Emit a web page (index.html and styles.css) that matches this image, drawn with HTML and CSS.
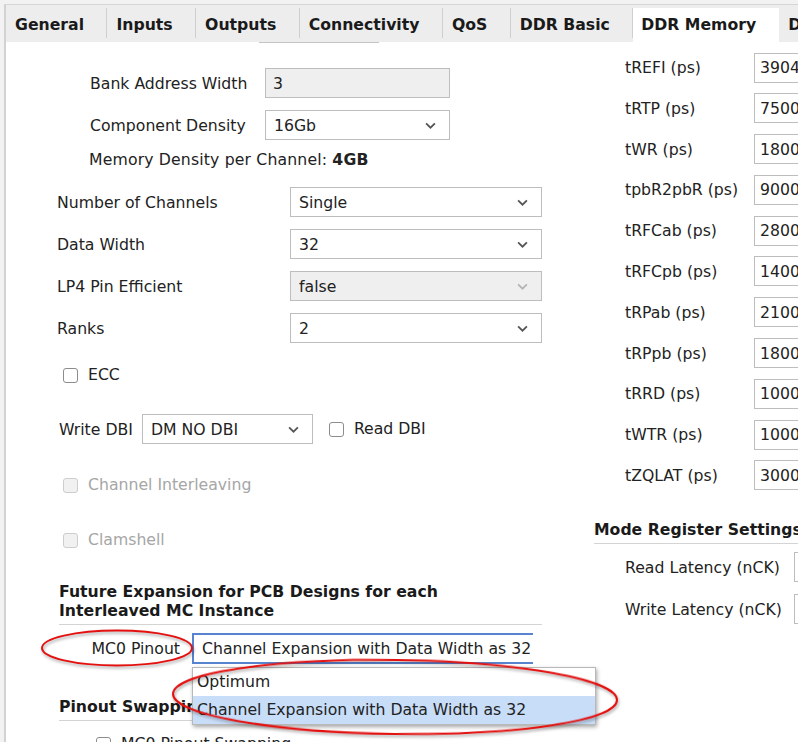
FILE: index.html
```html
<!DOCTYPE html>
<html>
<head>
<meta charset="utf-8">
<link rel="stylesheet" href="styles.css">
</head>
<body>
<div class="frame">
  <div class="panel">
    <div class="tabs">
      <div class="tab">General</div>
      <div class="tab">Inputs</div>
      <div class="tab">Outputs</div>
      <div class="tab">Connectivity</div>
      <div class="tab">QoS</div>
      <div class="tab">DDR Basic</div>
      <div class="tab active">DDR Memory</div>
      <div class="tab">DDR Address Mapping</div>
    </div>
    <div class="content">
      <div class="col-left">
        <div class="stub"></div>

        <div class="row row-a first">
          <div class="label la">Bank Address Width</div>
          <div class="field disabled wa">3</div>
        </div>
        <div class="row row-a">
          <div class="label la">Component Density</div>
          <div class="field select wa">16Gb<svg class="chev" viewBox="0 0 10 6"><path d="M1 1 L5 5 L9 1"/></svg></div>
        </div>
        <div class="density">Memory Density per Channel: <b>4GB</b></div>

        <div class="row row-b first">
          <div class="label lb">Number of Channels</div>
          <div class="field select wb">Single<svg class="chev" viewBox="0 0 10 6"><path d="M1 1 L5 5 L9 1"/></svg></div>
        </div>
        <div class="row row-b">
          <div class="label lb">Data Width</div>
          <div class="field select wb">32<svg class="chev" viewBox="0 0 10 6"><path d="M1 1 L5 5 L9 1"/></svg></div>
        </div>
        <div class="row row-b">
          <div class="label lb">LP4 Pin Efficient</div>
          <div class="field select disabled wb">false<svg class="chev light" viewBox="0 0 10 6"><path d="M1 1 L5 5 L9 1"/></svg></div>
        </div>
        <div class="row row-b">
          <div class="label lb">Ranks</div>
          <div class="field select wb">2<svg class="chev" viewBox="0 0 10 6"><path d="M1 1 L5 5 L9 1"/></svg></div>
        </div>

        <div class="check ecc"><span class="box"></span>ECC</div>

        <div class="row dbi">
          <div class="label ldbi">Write DBI</div>
          <div class="field select wdbi">DM NO DBI<svg class="chev" viewBox="0 0 10 6"><path d="M1 1 L5 5 L9 1"/></svg></div>
          <div class="check inline"><span class="box"></span>Read DBI</div>
        </div>

        <div class="check off ci"><span class="box"></span>Channel Interleaving</div>
        <div class="check off cs"><span class="box"></span>Clamshell</div>

        <div class="heading h-future">Future Expansion for PCB Designs for each<br>Interleaved MC Instance</div>

        <div class="row mc0">
          <div class="label lmc">MC0 Pinout</div>
          <div class="combo">Channel Expansion with Data Width as 32</div>
          <div class="popup">
            <div class="item">Optimum</div>
            <div class="item sel">Channel Expansion with Data Width as 32</div>
          </div>
        </div>

        <div class="heading h-swap">Pinout Swapping</div>
        <div class="check swapck"><span class="box"></span>MC0 Pinout Swapping</div>
      </div>

      <div class="col-right">
        <div class="rrow first"><div class="rlabel">tREFI (ps)</div><div class="rfield">3904000</div></div>
        <div class="rrow"><div class="rlabel">tRTP (ps)</div><div class="rfield">7500</div></div>
        <div class="rrow"><div class="rlabel">tWR (ps)</div><div class="rfield">18000</div></div>
        <div class="rrow"><div class="rlabel">tpbR2pbR (ps)</div><div class="rfield">90000</div></div>
        <div class="rrow"><div class="rlabel">tRFCab (ps)</div><div class="rfield">280000</div></div>
        <div class="rrow"><div class="rlabel">tRFCpb (ps)</div><div class="rfield">140000</div></div>
        <div class="rrow"><div class="rlabel">tRPab (ps)</div><div class="rfield">21000</div></div>
        <div class="rrow"><div class="rlabel">tRPpb (ps)</div><div class="rfield">18000</div></div>
        <div class="rrow"><div class="rlabel">tRRD (ps)</div><div class="rfield">10000</div></div>
        <div class="rrow"><div class="rlabel">tWTR (ps)</div><div class="rfield">10000</div></div>
        <div class="rrow"><div class="rlabel">tZQLAT (ps)</div><div class="rfield">30000</div></div>

        <div class="heading h-mode">Mode Register Settings</div>
        <div class="rrow lat first-lat"><div class="rlabel wide">Read Latency (nCK)</div><div class="rfield">28</div></div>
        <div class="rrow lat"><div class="rlabel wide">Write Latency (nCK)</div><div class="rfield">14</div></div>
      </div>
    </div>
  </div>
</div>
<svg class="annot" width="798" height="742" viewBox="0 0 798 742">
  <ellipse cx="117" cy="648" rx="75" ry="17.5"/>
  <ellipse cx="395" cy="697" rx="222" ry="37" transform="rotate(0.8 395 697)"/>
</svg>
</body>
</html>
```
FILE: styles.css
```css
html, body {
  margin: 0;
  padding: 0;
  width: 798px;
  height: 742px;
  overflow: hidden;
  background: #f2f2f2;
  font-family: "DejaVu Sans", "Liberation Sans", sans-serif;
  font-size: 15.7px;
  color: #222;
}
.frame {
  padding: 4px 0 0 4px;
  height: 738px;
  box-sizing: border-box;
}
.panel {
  border-left: 2px solid #d2d2d2;
  border-top: 1px solid #d6d6d6;
  height: 737px;
  display: flex;
  flex-direction: column;
}
.tabs {
  height: 37px;
  flex: none;
  display: flex;
  align-items: flex-start;
  padding-top: 3px;
  box-sizing: border-box;
  background: #ededed;
  white-space: nowrap;
  overflow: hidden;
}
.tab {
  flex: none;
  height: 30px;
  line-height: 33px;
  padding: 0 22.4px 0 9px;
  border-right: 1px solid #cfcfcf;
  font-weight: bold;
  color: #1a1a1a;
}
.tab.active {
  height: 34px;
  background: #fff;
  border-right: none;
  padding: 0 23px 0 8px;
}
.content {
  flex: 1;
  display: flex;
  background: #fff;
  overflow: hidden;
}
.col-left {
  width: 588px;
  flex: none;
  display: flex;
  flex-direction: column;
  position: relative;
}
.col-right {
  flex: 1;
  min-width: 0;
  display: flex;
  flex-direction: column;
}
.stub {
  margin-left: 253px;
  width: 120px;
  height: 6px;
  box-sizing: border-box;
  border: 1px solid #c4c4c4;
  border-top: none;
}
.row {
  display: flex;
  align-items: center;
  flex: none;
}
.label { white-space: nowrap; }
.field {
  height: 30px;
  box-sizing: border-box;
  border: 1px solid #bdbdbd;
  background: #fff;
  display: flex;
  align-items: center;
  padding-left: 7px;
  position: relative;
  white-space: nowrap;
}
.field.select { justify-content: space-between; padding-right: 13px; padding-left: 8px; }
.field.disabled { background: #efefef; }
.chev { width: 11px; height: 7px; fill: none; stroke: #555; stroke-width: 1.6; }
.chev.light { stroke: #b4b4b4; }

.row-a { padding-left: 84px; margin-top: 12px; }
.row-a.first { margin-top: 25px; }
.la { width: 175px; }
.wa { width: 185px; }
.density { margin-top: 10px; padding-left: 83px; line-height: 20px; letter-spacing: 0.15px; }
.density b { font-weight: bold; }

.row-b { padding-left: 51px; margin-top: 12px; }
.row-b.first { margin-top: 17px; }
.lb { width: 233px; }
.wb { width: 252px; }

.check {
  display: flex;
  align-items: center;
  line-height: 20px;
  white-space: nowrap;
}
.check .box {
  width: 15px;
  height: 15px;
  box-sizing: border-box;
  border: 1px solid #8c8c8c;
  border-radius: 3px;
  background: #fff;
  margin-right: 10px;
  flex: none;
}
.check.off { color: #a6a6a6; }
.check.off .box { border-color: #cdcdcd; background: #f1f1f1; }
.ecc { padding-left: 57px; margin-top: 22px; }
.dbi { padding-left: 53px; margin-top: 29px; }
.ldbi { margin-right: 9px; }
.wdbi { width: 171px; padding-right: 14px; padding-left: 9px; }
.check.inline { margin-left: 16px; }
.ci { padding-left: 57px; margin-top: 31px; }
.cs { padding-left: 57px; margin-top: 35px; }

.heading {
  font-weight: bold;
  line-height: 19px;
  border-bottom: 1px solid #d4d4d4;
  color: #1a1a1a;
  white-space: nowrap;
}
.h-future { margin: 32px 0 0 53px; width: 483px; padding-bottom: 4px; }
.mc0 { margin-top: 8px; padding-left: 53px; position: relative; }
.lmc { width: 121px; text-align: right; margin-right: 12px; }
.combo {
  width: 341px;
  height: 31px;
  box-sizing: border-box;
  border: 2px solid #5884cf;
  border-right: none;
  padding-left: 8px;
  display: flex;
  align-items: center;
  overflow: hidden;
  white-space: nowrap;
}
.popup {
  position: absolute;
  left: 186px;
  top: 34px;
  width: 402px;
  background: #fff;
  border: 1px solid #b8b8b8;
  box-shadow: 1px 2px 4px rgba(0,0,0,0.35);
  z-index: 2;
}
.item {
  height: 28px;
  line-height: 28px;
  padding-left: 4px;
  white-space: nowrap;
}
.item.sel { background: #c8ddf8; }
.h-swap { margin: 33px 0 0 53px; width: 483px; padding-bottom: 4px; }
.swapck { padding-left: 90px; margin-top: 13px; }

.rrow {
  display: flex;
  align-items: center;
  padding-left: 31px;
  margin-top: 10.8px;
  flex: none;
}
.rrow.first { margin-top: 10.5px; }
.rlabel { width: 129px; white-space: nowrap; flex: none; }
.rlabel.wide { width: 169px; }
.rfield {
  width: 110px;
  flex: none;
  height: 30px;
  box-sizing: border-box;
  border: 1px solid #bdbdbd;
  padding-left: 5px;
  display: flex;
  align-items: center;
}
.h-mode { margin-top: 30px; padding-bottom: 4px; }
.rrow.lat { margin-top: 12px; }
.rrow.lat.first-lat { margin-top: 8px; }

.annot {
  position: absolute;
  left: 0;
  top: 0;
  pointer-events: none;
  z-index: 5;
}
.annot ellipse {
  fill: none;
  stroke: #e4100f;
  stroke-width: 2;
  filter: drop-shadow(1px 2px 1.5px rgba(0,0,0,0.35));
}
```
